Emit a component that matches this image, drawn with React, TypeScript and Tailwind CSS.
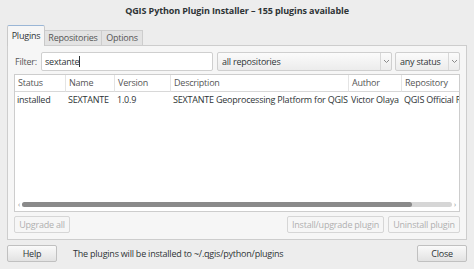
import React from 'react';

const font = { fontFamily: '"Open Sans", "DejaVu Sans", sans-serif' };

function Chevron() {
  return (
    <svg width="7" height="5" viewBox="0 0 7 5" className="text-[#8a8a8a]">
      <path d="M1 1 L3.5 3.5 L6 1" fill="none" stroke="currentColor" strokeWidth="1" />
    </svg>
  );
}

function Select({ label, width }: { label: string; width: string }) {
  return (
    <div className={`${width} h-[19px] flex items-stretch border border-[#cfcfcf] rounded-[2px] bg-gradient-to-b from-[#fbfbfb] to-[#ececec]`}>
      <div className="flex-1 px-[4px] flex items-center text-[#2e3436]">{label}</div>
      <div className="w-[11px] border-l border-[#d8d8d8] flex items-center justify-center">
        <Chevron />
      </div>
    </div>
  );
}

const columns = [
  { name: 'Status', w: 'w-[51px]', v: 'installed' },
  { name: 'Name', w: 'w-[49px]', v: 'SEXTANTE' },
  { name: 'Version', w: 'w-[56px]', v: '1.0.9' },
  { name: 'Description', w: 'w-[178px]', v: 'SEXTANTE Geoprocessing Platform for QGIS' },
  { name: 'Author', w: 'w-[53px]', v: 'Victor Olaya' },
  { name: 'Repository', w: 'w-[80px]', v: 'QGIS Official Repository' },
];

export default function App() {
  return (
    <div className="w-[474px] h-[269px] bg-[#ededed] flex flex-col text-[9px] tracking-[-0.22px] text-[#2e3436] overflow-hidden" style={font}>
      {/* Title */}
      <div className="h-[20px] flex items-center justify-center font-bold tracking-[-0.1px] text-[#2e3436] pt-[1px]">
        QGIS Python Plugin Installer – 155 plugins available
      </div>

      {/* Tabs */}
      <div className="mt-[5px] px-[7px] flex items-end h-[21px] relative z-10">
        <div className="w-[38px] h-[21px] bg-[#f6f6f6] border border-[#c9c9c9] border-b-0 rounded-t-[2px] flex items-center justify-center border-t-[#9ab6d6]">
          Plugins
        </div>
        <div className="w-[57px] h-[16px] bg-[#e3e3e3] border border-[#cdcdcd] border-l-0 flex items-center justify-center text-[#555]">
          Repositories
        </div>
        <div className="w-[41px] h-[16px] bg-[#e3e3e3] border border-[#cdcdcd] border-l-0 flex items-center justify-center text-[#555]">
          Options
        </div>
      </div>

      {/* Panel */}
      <div className="mx-[7px] -mt-[1px] h-[195px] bg-[#f6f6f6] border border-[#cdcdcd] px-[6px] pt-[6px] flex flex-col">
        <div className="flex items-center h-[19px]">
          <span className="w-[27px] pl-[1px] text-[#555]">Filter:</span>
          <div className="w-[172px] h-[19px] bg-white border border-[#cfcfcf] rounded-[2px] flex items-center px-[3px]">
            sextante<span className="w-px h-[11px] bg-[#2e3436]" />
          </div>
          <div className="ml-[4px]">
            <Select label="all repositories" width="w-[175px]" />
          </div>
          <div className="ml-[3px]">
            <Select label="any status" width="w-[65px]" />
          </div>
        </div>

        {/* Table */}
        <div className="mt-[3px] h-[138px] bg-white border border-[#cdcdcd] flex flex-col overflow-hidden">
          <div className="flex-1 flex overflow-hidden">
            {columns.map((c, i) => (
              <div key={c.name} className={`${c.w} shrink-0 flex flex-col`}>
                <div className={`h-[17px] flex items-center pl-[3px] border-b border-[#d8d8d8] ${i < columns.length - 1 ? 'border-r border-r-[#e4e4e4]' : ''} text-[#555] whitespace-nowrap`}>
                  {c.name}
                </div>
                <div className="h-[16px] flex items-center pl-[2px] whitespace-nowrap overflow-hidden">{c.v}</div>
              </div>
            ))}
          </div>
          <div className="h-[10px] flex items-center px-[3px] gap-[2px] pb-[3px]">
            <span className="text-[7px] text-[#888] leading-none">‹</span>
            <div className="flex-1 h-[5px] bg-[#d6d6d6] rounded-full flex">
              <div className="w-[390px] h-[5px] bg-[#8a8a8a] rounded-full" />
            </div>
            <span className="text-[7px] text-[#888] leading-none">›</span>
          </div>
        </div>

        {/* Buttons */}
        <div className="mt-[4px] flex items-center h-[17px]">
          <div className="w-[56px] h-[17px] border border-[#d6d6d6] rounded-[2px] flex items-center justify-center text-[#b0b0b0] bg-[#f6f6f6]">
            Upgrade all
          </div>
          <div className="flex-1" />
          <div className="w-[97px] h-[17px] border border-[#d6d6d6] rounded-[2px] flex items-center justify-center text-[#b0b0b0]">
            Install/upgrade plugin
          </div>
          <div className="ml-[4px] w-[72px] h-[17px] border border-[#d6d6d6] rounded-[2px] flex items-center justify-center text-[#b0b0b0]">
            Uninstall plugin
          </div>
        </div>
      </div>

      {/* Bottom */}
      <div className="mt-[5px] px-[7px] flex items-center h-[17px]">
        <div className="w-[50px] h-[17px] border border-[#c0c0c0] rounded-[2px] bg-gradient-to-b from-[#fafafa] to-[#e2e2e2] flex items-center justify-center">
          Help
        </div>
        <span className="ml-[16px]">The plugins will be installed to ~/.qgis/python/plugins</span>
        <div className="flex-1" />
        <div className="w-[50px] h-[17px] border border-[#c0c0c0] rounded-[2px] bg-gradient-to-b from-[#fafafa] to-[#e2e2e2] flex items-center justify-center">
          Close
        </div>
      </div>
    </div>
  );
}
